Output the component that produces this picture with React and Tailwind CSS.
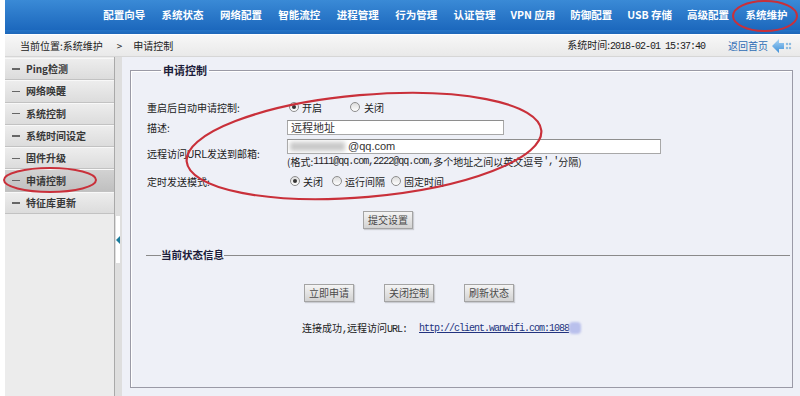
import React from "react";

const navItems = [
  "配置向导",
  "系统状态",
  "网络配置",
  "智能流控",
  "进程管理",
  "行为管理",
  "认证管理",
  "VPN 应用",
  "防御配置",
  "USB 存储",
  "高级配置",
  "系统维护",
];

const sideItems = ["Ping检测", "网络唤醒", "系统控制", "系统时间设定", "固件升级", "申请控制", "特征库更新"];

function Radio({ checked }) {
  return (
    <span className="inline-flex shrink-0 items-center justify-center w-[10px] h-[10px] rounded-full border border-[#8d8d8d] bg-linear-to-b from-[#dcdcdc] to-white">
      {checked && <span className="w-[4px] h-[4px] rounded-full bg-[#333]" />}
    </span>
  );
}

function Btn({ children }) {
  return (
    <button className="w-[50px] h-[18px] border border-[#a4a4a4] bg-linear-to-b from-[#f4f4f4] to-[#d2d2d2] text-[10px] leading-none text-[#4a4a4a] shadow-[1px_1px_1px_rgba(0,0,0,0.15)]">
      {children}
    </button>
  );
}

const mono = "font-['Liberation_Mono',monospace] tracking-[-1px]";

export default function App() {
  return (
    <div className="relative w-[800px] h-[396px] overflow-hidden bg-white pl-[5px] flex flex-col font-['Noto_Sans_CJK_SC',sans-serif] text-[10px] text-[#222]">
      {/* top nav */}
      <div className="h-[34px] shrink-0 flex flex-col">
        <div className="h-[30px] bg-linear-to-b from-[#3a8ad6] to-[#1c68bd] flex items-center pl-[90px]">
          {navItems.map((n) => (
            <div key={n} className="w-[58.4px] text-center text-white font-bold text-[10.5px] leading-none whitespace-nowrap">
              {n}
            </div>
          ))}
        </div>
        <div className="h-[4px] bg-linear-to-b from-[#2474c8] to-[#1d66b8]" />
      </div>

      {/* breadcrumb */}
      <div className="h-[22px] shrink-0 mt-[1px] flex items-center bg-linear-to-b from-[#f7f7f7] to-[#e9e9e9] border-b border-[#d6d6d6] pl-[15px] pr-[8px]">
        <span>当前位置:系统维护</span>
        <span className="ml-[14px]">&gt;</span>
        <span className="ml-[11px]">申请控制</span>
        <span className="ml-auto">
          系统时间:<span className={mono}>2018-02-01 15:37:40</span>
        </span>
        <span className="ml-[23px] text-[#2f6db5]">返回首页</span>
        <svg className="ml-[4px]" width="20" height="14" viewBox="0 0 20 14">
          <defs>
            <linearGradient id="ar" x1="0" y1="0" x2="0" y2="1">
              <stop offset="0" stopColor="#a9d4f5" />
              <stop offset="1" stopColor="#3d8fd8" />
            </linearGradient>
          </defs>
          <polygon points="0,7 7,0 7,4 12,4 12,10 7,10 7,14" fill="url(#ar)" />
          <circle cx="15" cy="5" r="1.2" fill="#8cbbe0" />
          <circle cx="18" cy="5" r="1.2" fill="#8cbbe0" />
          <circle cx="15" cy="9" r="1.2" fill="#8cbbe0" />
          <circle cx="18" cy="9" r="1.2" fill="#8cbbe0" />
        </svg>
      </div>

      <div className="flex flex-1 min-h-0">
        {/* sidebar */}
        <div className="w-[110px] shrink-0 bg-[#ececec] border-r border-[#a9a9a9] flex flex-col pt-[1px]">
          {sideItems.map((s) => {
            const active = s === "申请控制";
            return (
              <div
                key={s}
                className={`h-[22.3px] flex items-center border-b border-[#c2c2c2] border-t border-t-[#f8f8f8] ${
                  active ? "bg-linear-to-b from-[#d2d2d2] to-[#c0c0c0]" : "bg-linear-to-b from-[#ededed] to-[#dcdcdc]"
                }`}
              >
                <span className="ml-[7px] w-[8px] h-[1.5px] bg-[#666]" />
                <span className="ml-[6px] font-bold text-[#383838] leading-none">{s}</span>
              </div>
            );
          })}
        </div>

        {/* splitter */}
        <div className="w-[7px] shrink-0 bg-[#dedede] flex flex-col">
          <div className="mt-[159px] ml-[1px] w-[4px] h-[47px] bg-white flex items-center">
            <span className="w-0 h-0 border-y-[4px] border-y-transparent border-r-[4px] border-r-[#1b7c9c]" />
          </div>
        </div>

        {/* content */}
        <div className="flex-1 bg-[#eef0f7] flex flex-col pl-[8px] pr-[7px] pt-[7px] pb-[8px]">
          <fieldset className="flex-1 min-h-0 border border-[#9a9aa6] pl-[16px] shadow-[inset_1px_1px_0_#fff]">
            <legend className="ml-[14px] px-[2px] text-[11px] font-bold leading-[12px] text-[#1c1c3a]">申请控制</legend>

            <div className="pt-[21px]">
              <div className="h-[20px] flex items-center">
                <span className="w-[140px] shrink-0">重启后自动申请控制:</span>
                <span className="ml-[2px] flex items-center">
                  <Radio checked />
                  <span className="ml-[3px]">开启</span>
                  <span className="ml-[28px]"><Radio /></span>
                  <span className="ml-[4px]">关闭</span>
                </span>
              </div>

              <div className="h-[20px] flex items-center">
                <span className="w-[140px] shrink-0">描述:</span>
                <div className="w-[217px] h-[15px] border border-[#a8a8a8] border-t-[#8e8e8e] bg-white pl-[3px] flex items-center text-[11px] text-[#333]">
                  远程地址
                </div>
              </div>

              <div className="h-[34px] flex items-center">
                <span className="w-[140px] shrink-0">
                  远程访问<span className="font-['Liberation_Sans',sans-serif]">URL</span>发送到邮箱:
                </span>
                <div className="flex flex-col">
                  <div className="w-[374px] h-[15px] border border-[#a8a8a8] border-t-[#8e8e8e] bg-white flex items-center">
                    <span className="ml-[2px] w-[55px] h-[9px] bg-[#c9c9c9] blur-[2px]" />
                    <span className="ml-[3px] font-['Liberation_Sans',sans-serif] text-[11px] text-[#333]">@qq.com</span>
                  </div>
                  <div className="h-[15px] flex items-center whitespace-nowrap">
                    (格式:<span className={mono}>1111@qq.com,2222@qq.com,</span>多个地址之间以英文逗号<span className={mono}>','</span>分隔)
                  </div>
                </div>
              </div>

              <div className="h-[20px] flex items-center">
                <span className="w-[140px] shrink-0">定时发送模式:</span>
                <span className="ml-[3px] flex items-center">
                  <Radio checked />
                  <span className="ml-[3px]">关闭</span>
                  <span className="ml-[9px]"><Radio /></span>
                  <span className="ml-[3px]">运行间隔</span>
                  <span className="ml-[6px]"><Radio /></span>
                  <span className="ml-[3px]">固定时间</span>
                </span>
              </div>

              <div className="mt-[20px] ml-[216px]">
                <Btn>提交设置</Btn>
              </div>

              <div className="mt-[19px] h-[14px] flex items-center -ml-[1px] mr-[2px]">
                <span className="w-[15px] h-px bg-[#8a8a8a]" />
                <span className="text-[10.5px] font-bold text-[#1c1c3a] leading-none">当前状态信息</span>
                <span className="flex-1 h-px bg-[#8a8a8a]" />
              </div>

              <div className="mt-[22px] ml-[157px] flex gap-[30px]">
                <Btn>立即申请</Btn>
                <Btn>关闭控制</Btn>
                <Btn>刷新状态</Btn>
              </div>

              <div className="mt-[19px] ml-[155px] h-[14px] flex items-center whitespace-nowrap">
                <span>
                  连接成功<span className={mono}>,</span>远程访问<span className={mono}>URL:</span>
                </span>
                <span className={`ml-[12px] ${mono} text-[#22337f] underline`}>http://client.wanwifi.com:1088</span>
                <span className="w-[12px] h-[12px] bg-[#b9c0ec] blur-[1px] rounded-sm" />
              </div>
            </div>
          </fieldset>
        </div>
      </div>

      {/* hand-drawn highlight marks */}
      <svg className="absolute inset-0 pointer-events-none" width="800" height="396">
        <ellipse cx="765" cy="16" rx="32" ry="15" fill="none" stroke="#c9303a" strokeWidth="2" />
        <ellipse cx="50" cy="180" rx="46" ry="12" fill="none" stroke="#c9303a" strokeWidth="2" />
        <ellipse cx="364" cy="146" rx="178" ry="51" transform="rotate(-5 364 146)" fill="none" stroke="#c9303a" strokeWidth="2.2" />
      </svg>
    </div>
  );
}
